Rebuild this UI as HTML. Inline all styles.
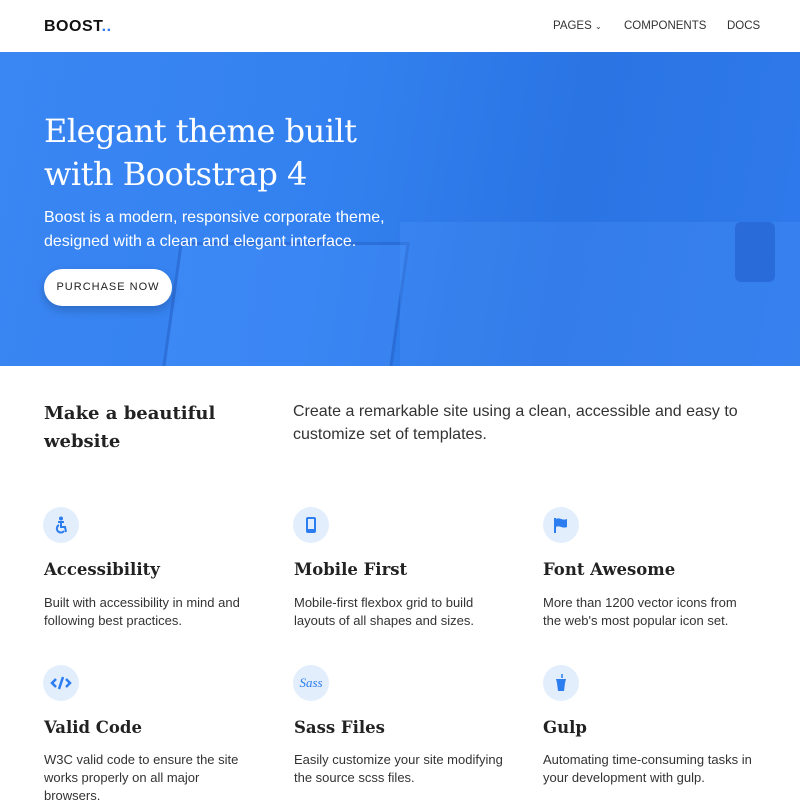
<!DOCTYPE html>
<html><head><meta charset="utf-8"><style>
*{margin:0;padding:0;box-sizing:border-box}
body{width:800px;height:800px;overflow:hidden;background:#fff;font-family:"Liberation Sans",sans-serif;color:#333;position:relative}
.hdr{height:52px;position:relative}
.logo{position:absolute;left:44px;top:18px;font-weight:bold;font-size:16px;color:#111;letter-spacing:.5px}
.logo span{color:#2b7df0}
.nav{position:absolute;top:20px;font-size:11.5px;color:#333}
.hero{position:absolute;top:52px;left:0;width:800px;height:314px;background:linear-gradient(100deg,#3a86f3 0%,#3381f0 40%,#2a74e4 70%,#2f7aec 100%);overflow:hidden}
.hero h1{position:absolute;left:44px;top:58px;font-family:"DejaVu Serif",serif;font-weight:normal;font-size:32px;line-height:43px;color:#fff;letter-spacing:-.5px}
.hero p{position:absolute;left:44px;top:154px;font-size:16px;line-height:24px;color:#fff}
.btn{position:absolute;left:44px;top:217px;width:128px;height:37px;border-radius:19px;background:#fff;color:#222;font-size:11px;letter-spacing:1px;text-align:center;line-height:37px;box-shadow:0 4px 10px rgba(0,0,0,.2)}
.s2h{position:absolute;left:44px;top:400px;font-family:"DejaVu Serif",serif;font-weight:bold;font-size:18px;line-height:28px;color:#222}
.s2p{position:absolute;left:293px;top:400px;font-size:16px;line-height:23px;color:#333}
.ic{position:absolute;width:36px;height:36px;border-radius:50%;background:#e3eefd;display:flex;align-items:center;justify-content:center;color:#2b7df0}
.ft{position:absolute;font-family:"DejaVu Serif",serif;font-weight:bold;font-size:16.5px;color:#222}
.fd{position:absolute;font-size:13px;line-height:18px;color:#333;width:215px}
</style></head><body>
<div class="hdr">
<div class="logo">BOOST<span>..</span></div>
<div class="nav" style="left:553px">PAGES <span style="font-size:8px">&#8964;</span></div>
<div class="nav" style="left:624px">COMPONENTS</div>
<div class="nav" style="left:727px">DOCS</div>
</div>
<div class="hero">
<div style="position:absolute;left:170px;top:190px;width:230px;height:140px;border:3px solid rgba(20,70,170,.35);transform:skewX(-8deg);background:rgba(80,150,255,.25)"></div>
<div style="position:absolute;left:400px;top:170px;width:400px;height:150px;background:rgba(90,160,255,.2)"></div>
<div style="position:absolute;left:735px;top:170px;width:40px;height:60px;border-radius:6px;background:rgba(20,70,180,.35)"></div>
<h1>Elegant theme built<br>with Bootstrap 4</h1>
<p>Boost is a modern, responsive corporate theme,<br>designed with a clean and elegant interface.</p>
<div class="btn">PURCHASE NOW</div>
</div>
<div class="s2h">Make a beautiful<br>website</div>
<div class="s2p">Create a remarkable site using a clean, accessible and easy to<br>customize set of templates.</div>

<div class="ic" style="left:43px;top:507px"><svg width="14" height="18" viewBox="0 0 14 18"><circle cx="7" cy="2.5" r="2" fill="#2b7df0"/><path d="M4 6h6M7 6v5h4l1 5M5 9a4 4 0 1 0 5 6" stroke="#2b7df0" stroke-width="2" fill="none"/></svg></div>
<div class="ic" style="left:293px;top:507px"><svg width="12" height="18"><rect x="1" y="1" width="10" height="16" rx="2" fill="#2b7df0"/><rect x="3" y="3" width="6" height="10" fill="#e3eefd"/></svg></div>
<div class="ic" style="left:543px;top:507px"><svg width="16" height="16"><path d="M2 1v15" stroke="#2b7df0" stroke-width="2"/><path d="M3 2c4-2 6 2 11 0v8c-5 2-7-2-11 0z" fill="#2b7df0"/></svg></div>
<div class="ic" style="left:43px;top:665px"><svg width="22" height="16"><path d="M6 4L2 8l4 4M16 4l4 4-4 4M13 2l-4 12" stroke="#2b7df0" stroke-width="2.5" fill="none"/></svg></div>
<div class="ic" style="left:293px;top:665px;font-family:'Liberation Serif',serif;font-style:italic;font-size:13px">Sass</div>
<div class="ic" style="left:543px;top:665px"><svg width="12" height="18"><path d="M7 0v4" stroke="#2b7df0" stroke-width="1.5"/><path d="M1 5h10l-1 4H2z M2 9h8l-1 8H3z" fill="#2b7df0"/></svg></div>

<div class="ft" style="left:44px;top:560px">Accessibility</div>
<div class="ft" style="left:294px;top:560px">Mobile First</div>
<div class="ft" style="left:543px;top:560px">Font Awesome</div>
<div class="fd" style="left:44px;top:594px">Built with accessibility in mind and following best practices.</div>
<div class="fd" style="left:294px;top:594px">Mobile-first flexbox grid to build layouts of all shapes and sizes.</div>
<div class="fd" style="left:543px;top:594px;width:205px">More than 1200 vector icons from the web's most popular icon set.</div>
<div class="ft" style="left:44px;top:718px">Valid Code</div>
<div class="ft" style="left:294px;top:718px">Sass Files</div>
<div class="ft" style="left:543px;top:718px">Gulp</div>
<div class="fd" style="left:44px;top:751px;width:200px">W3C valid code to ensure the site works properly on all major browsers.</div>
<div class="fd" style="left:294px;top:751px">Easily customize your site modifying the source scss files.</div>
<div class="fd" style="left:543px;top:751px">Automating time-consuming tasks in your development with gulp.</div>
</body></html>
